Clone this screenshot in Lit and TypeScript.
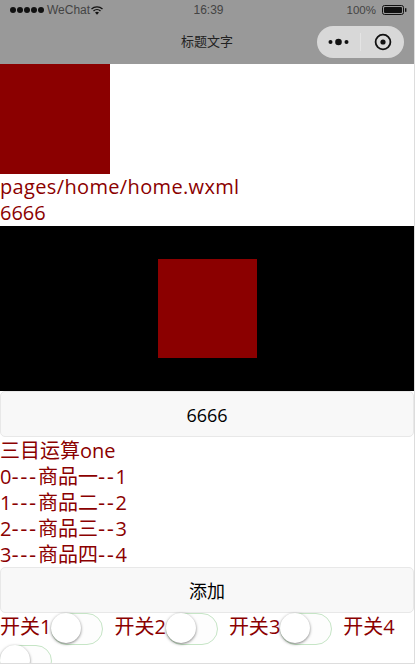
import { LitElement, html, css } from "lit";
import { customElement } from "lit/decorators.js";

@customElement("app-switch")
class AppSwitch extends LitElement {
  static styles = css`
    :host { display: inline-block; vertical-align: top; }
    .track { display: block; box-sizing: border-box; width: 52px; height: 32px; border-radius: 16px; border: 1px solid #c6e5c6; background: #fdfdfd; position: relative; }
    .thumb { position: absolute; left: -1px; top: -1px; width: 30px; height: 30px; border-radius: 50%; background: #fff; box-shadow: 0 1px 3px rgba(0,0,0,.5); }
  `;
  render() { return html`<span class="track"><span class="thumb"></span></span>`; }
}

@customElement("app-root")
class AppRoot extends LitElement {
  static styles = css`
    :host { display: block; width: 415px; height: 664px; overflow: hidden; box-sizing: border-box; border-right: 1px solid #ddd; border-bottom: 1px solid #ddd; font-family: "Open Sans", "Noto Sans CJK SC", sans-serif; font-size: 20px; line-height: 26px; color: #8b0000; background: #fff; }
    .head { height: 64px; background: #999; color: #222; font-family: "Liberation Sans", "Noto Sans CJK SC", sans-serif; display: flex; flex-direction: column; }
    .status { height: 20px; display: grid; grid-template-columns: 1fr auto 1fr; align-items: center; font-size: 12px; line-height: 20px; color: #444; padding: 0 7px 0 10px; }
    .left { display: flex; align-items: center; }
    .dots { display: flex; gap: 1px; margin-right: 3px; }
    .dots i { width: 6px; height: 6px; border-radius: 50%; background: #111; }
    .wifi { margin-left: 1px; }
    .right { display: flex; justify-content: flex-end; align-items: center; gap: 6px; font-size: 11.5px; }
    .bar { flex: 1; display: grid; grid-template-columns: 1fr auto 1fr; align-items: center; }
    .title { grid-column: 2; font-size: 13px; font-family: "Noto Sans CJK SC", sans-serif; line-height: 20px; margin-top: -2px; }
    .capsule { grid-column: 3; justify-self: end; margin-right: 10px; width: 87px; height: 32px; border-radius: 16px; background: #d8d8d8; display: flex; align-items: center; }
    .capsule > div { flex: 1; height: 100%; display: flex; align-items: center; justify-content: center; }
    .capsule .sep { flex: 0 0 1px; width: 1px; height: 18px; background: #e4e4e4; }
    .box { width: 110px; height: 110px; background: #8b0000; }
    .black { height: 165px; background: #000; display: flex; align-items: center; justify-content: center; }
    .inner { width: 99px; height: 99px; background: #8b0000; }
    .btn { box-sizing: border-box; height: 46px; padding-top: 1px; display: flex; align-items: center; justify-content: center; background: #f8f8f8; border: 1px solid #e8e8e8; border-radius: 5px; color: #000; font-size: 18px; }
    .wide { letter-spacing: .35px; }
    .dash { font-family: "DejaVu Sans", sans-serif; letter-spacing: 1.6px; }
    .line { height: 26px; line-height: 28px; }
    .sw + .sw { margin-left: 11px; }
  `;
  render() {
    const items = [["0", "商品一", "1"], ["1", "商品二", "2"], ["2", "商品三", "3"], ["3", "商品四", "4"]];
    return html`
      <div class="head">
        <div class="status">
          <div class="left"><span class="dots"><i></i><i></i><i></i><i></i><i></i></span><span>WeChat</span>
            <svg class="wifi" width="12" height="9" viewBox="0 0 12 9"><path d="M.5 3A8 8 0 0 1 11.5 3M2.5 5A5 5 0 0 1 9.5 5" fill="none" stroke="#111" stroke-width="1.3"/><path d="M4 6.6a3 3 0 0 1 4 0L6 8.8z" fill="#111"/></svg>
          </div>
          <div>16:39</div>
          <div class="right"><span>100%</span>
            <svg width="25" height="10" viewBox="0 0 25 10"><rect x=".5" y=".5" width="21" height="9" rx="2" fill="none" stroke="#111"/><rect x="2" y="2" width="18" height="6" rx="1" fill="#111"/><rect x="23" y="3.2" width="1.4" height="3.6" fill="#111"/></svg>
          </div>
        </div>
        <div class="bar">
          <div class="title">标题文字</div>
          <div class="capsule">
            <div><svg width="21" height="8" viewBox="0 0 21 8"><circle cx="2.5" cy="4" r="2" fill="#111"/><circle cx="10.5" cy="4" r="3.3" fill="#111"/><circle cx="18.5" cy="4" r="2" fill="#111"/></svg></div>
            <span class="sep"></span>
            <div><svg width="18" height="18" viewBox="0 0 18 18"><circle cx="9" cy="9" r="7.4" fill="none" stroke="#111" stroke-width="1.8"/><circle cx="9" cy="9" r="2.6" fill="#111"/></svg></div>
          </div>
        </div>
      </div>
      <div class="box"></div>
      <div class="wide">pages/home/home.wxml</div>
      <div>6666</div>
      <div class="black"><div class="inner"></div></div>
      <div class="btn">6666</div>
      <div class="line">三目运算one</div>
      ${items.map(([a, b, c]) => html`<div class="line">${a}<span class="dash">---</span>${b}<span class="dash">--</span>${c}</div>`)}
      <div class="btn">添加</div>
      <div class="line">
        ${[1, 2, 3, 4].map((n) => html`<span class="sw">开关${n}<app-switch></app-switch></span>`)}
      </div>
    `;
  }
}
